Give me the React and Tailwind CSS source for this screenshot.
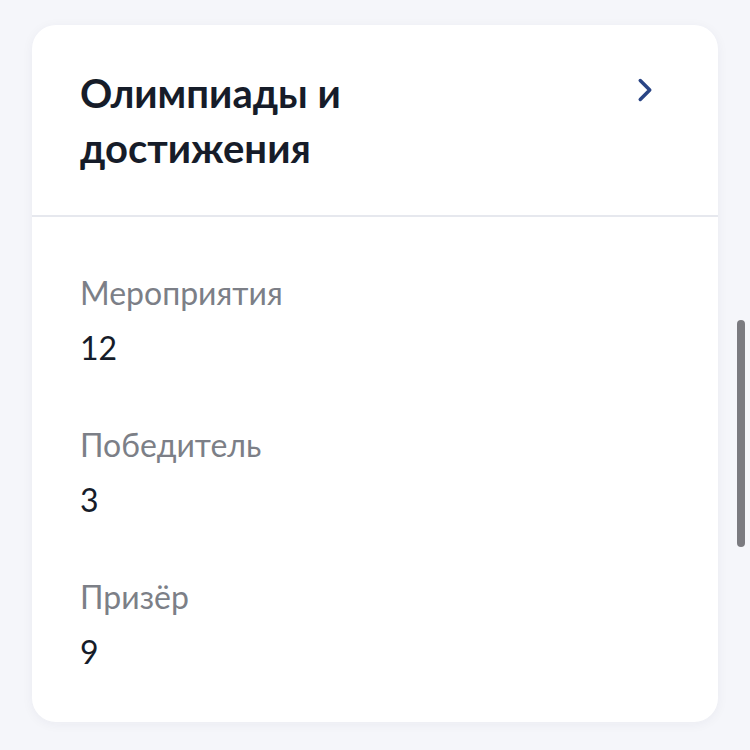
import { ChevronRight } from 'lucide-react'

const STATS = [
  { label: 'Мероприятия', value: 12 },
  { label: 'Победитель', value: 3 },
  { label: 'Призёр', value: 9 },
]

export default function App() {
  return (
    <div className="relative h-[750px] w-[750px] overflow-hidden bg-[#f5f6fa] pt-[25px] pl-[32px] font-['Lato',sans-serif]">
      <div className="w-[686px] h-[697px] rounded-[24px] bg-white shadow-[0_2px_12px_rgba(30,40,80,0.05)]">
        {/* Header */}
        <div className="flex items-start justify-between pl-[48px] pr-[54px] pt-[41px] pb-[39px] border-b-2 border-[#e6e8ee]">
          <h2 className="text-[40px] leading-[55px] font-bold text-[#161c29] w-[340px]">
            Олимпиады и достижения
          </h2>
          <ChevronRight className="mt-[5px] text-[#2a4585]" size={38} strokeWidth={2.2} />
        </div>

        {/* Stats */}
        <div className="flex flex-col gap-[42px] pl-[48px] pt-[48px]">
          {STATS.map((s) => (
            <div key={s.label} className="flex flex-col">
              <span className="text-[32px] leading-[55px] text-[#7c7f87]">{s.label}</span>
              <span className="text-[32px] leading-[55px] text-[#161c29]">{s.value}</span>
            </div>
          ))}
        </div>
      </div>

      {/* Scroll indicator */}
      <div className="absolute left-[737px] top-[320px] h-[227px] w-[8px] rounded-full bg-[#7b7b80]" />
    </div>
  )
}
